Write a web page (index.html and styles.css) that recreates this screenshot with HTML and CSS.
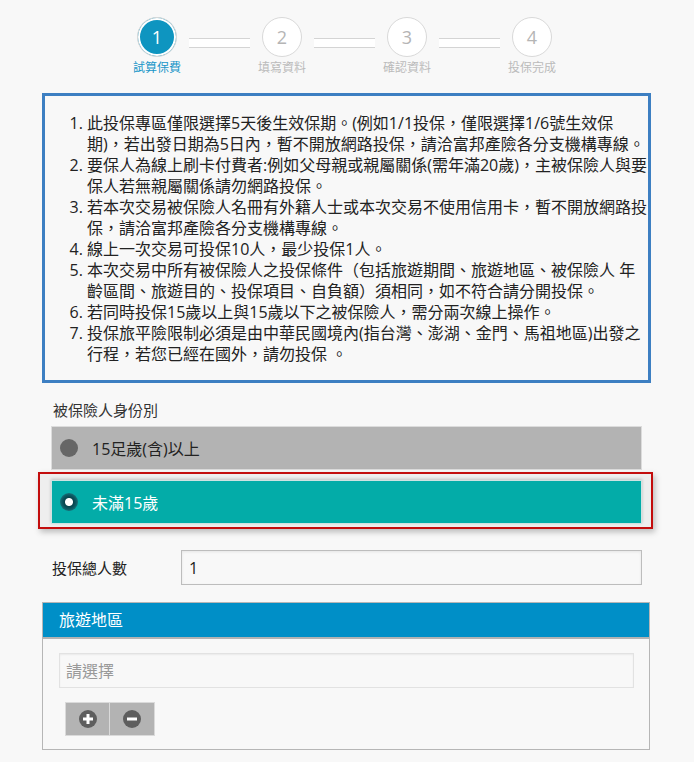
FILE: index.html
```html
<!DOCTYPE html>
<html lang="zh-Hant">
<head>
    <meta charset="UTF-8">
    <title>試算保費</title>
    <link rel="stylesheet" href="styles.css">
</head>
<body>
    <div class="steps">
        <div class="step active">
            <span class="circle">1</span>
            <span class="step-label">試算保費</span>
        </div>
        <div class="bar"></div>
        <div class="step">
            <span class="circle">2</span>
            <span class="step-label">填寫資料</span>
        </div>
        <div class="bar"></div>
        <div class="step">
            <span class="circle">3</span>
            <span class="step-label">確認資料</span>
        </div>
        <div class="bar"></div>
        <div class="step">
            <span class="circle">4</span>
            <span class="step-label">投保完成</span>
        </div>
    </div>

    <div class="page">
        <div class="notice">
            <ol>
                <li>此投保專區僅限選擇5天後生效保期。(例如1/1投保，僅限選擇1/6號生效保<br>期)，若出發日期為5日內，暫不開放網路投保，請洽富邦產險各分支機構專線。</li>
                <li>要保人為線上刷卡付費者:例如父母親或親屬關係(需年滿20歲)，主被保險人與要保人若無親屬關係請勿網路投保。</li>
                <li>若本次交易被保險人名冊有外籍人士或本次交易不使用信用卡，暫不開放網路投保，請洽富邦產險各分支機構專線。</li>
                <li>線上一次交易可投保10人，最少投保1人。</li>
                <li>本次交易中所有被保險人之投保條件（包括旅遊期間、旅遊地區、被保險人 年齡區間、旅遊目的、投保項目、自負額）須相同，如不符合請分開投保。</li>
                <li>若同時投保15歲以上與15歲以下之被保險人，需分兩次線上操作。</li>
                <li>投保旅平險限制必須是由中華民國境內(指台灣、澎湖、金門、馬祖地區)出發之行程，若您已經在國外，請勿投保 。</li>
            </ol>
        </div>

        <div class="field-title">被保險人身份別</div>
        <div class="options">
            <div class="option">
                <span class="radio"></span>
                <span>15足歲(含)以上</span>
            </div>
            <div class="option-focus">
                <div class="option checked">
                    <span class="radio"></span>
                    <span>未滿15歲</span>
                </div>
            </div>
        </div>

        <div class="count-row">
            <label for="total">投保總人數</label>
            <input type="text" id="total" value="1">
        </div>

        <div class="panel">
            <div class="panel-head">旅遊地區</div>
            <div class="panel-body">
                <input type="text" class="select" placeholder="請選擇">
                <div class="btns">
                    <button type="button" class="icon-btn">
                        <svg width="18" height="18" viewBox="0 0 18 18"><circle cx="9" cy="9" r="9" fill="#5e5e5e"/><rect x="4" y="7.5" width="10" height="3" fill="#fff"/><rect x="7.5" y="4" width="3" height="10" fill="#fff"/></svg>
                    </button>
                    <button type="button" class="icon-btn">
                        <svg width="18" height="18" viewBox="0 0 18 18"><circle cx="9" cy="9" r="9" fill="#5e5e5e"/><rect x="4" y="7.5" width="10" height="3" fill="#fff"/></svg>
                    </button>
                </div>
            </div>
        </div>
    </div>
</body>
</html>
```

FILE: styles.css
```css
body {
    margin: 0;
    background: #f8f8f8;
    font-family: "Open Sans", "Noto Sans CJK TC", sans-serif;
    color: #222;
}
.steps {
    display: flex;
    padding: 17px 0 0 137px;
}
.step {
    width: 40px;
    display: flex;
    flex-direction: column;
    align-items: center;
}
.circle {
    width: 38px;
    height: 38px;
    border: 1px solid #d9d9d9;
    border-radius: 50%;
    background: #fff;
    color: #b5b5b5;
    font-size: 18px;
    line-height: 38px;
    text-align: center;
}
.step.active .circle {
    background: #0e95c0;
    color: #fff;
    box-shadow: inset 0 0 0 2px #fff;
}
.step-label {
    margin-top: 3px;
    white-space: nowrap;
    font-size: 12px;
    line-height: 16px;
    color: #bbb;
}
.step.active .step-label {
    color: #1996c8;
}
.bar {
    width: 61px;
    height: 8px;
    margin: 21px 12px 0;
    background: #fff;
    border-top: 1px solid #d4d4d4;
    border-bottom: 1px solid #d4d4d4;
}
.page {
    width: 609px;
    margin-left: 42px;
    padding-bottom: 11px;
}
.notice {
    margin-top: 17px;
    border: 3px solid #3d7fc2;
    padding: 17px 0 15px 2px;
}
.notice ol {
    margin: 0 -3px 0 0;
    padding-left: 40px;
    font-size: 16px;
    line-height: 21px;
}
.field-title {
    margin: 17px 0 0 11px;
    font-size: 15px;
    line-height: 20px;
    color: #333;
}
.options {
    margin-top: 6px;
    padding: 0 9px;
}
.option {
    display: flex;
    align-items: center;
    gap: 14px;
    height: 42px;
    padding-left: 8px;
    border: 1px solid #dcdcdc;
    background: #b3b3b3;
    font-size: 16px;
}
.radio {
    width: 18px;
    height: 18px;
    border-radius: 50%;
    background: #666;
}
.option-focus {
    margin: 2px -11px 0 -13px;
    padding: 6px 9px 3px 11px;
    border: 2px solid #c30d0d;
    background: #eee;
    box-shadow: 2px 3px 6px rgba(0, 0, 0, 0.25);
}
.option.checked {
    background: #03aca8;
    border-color: #cfe3e2;
    color: #fff;
    box-shadow: 0 -1px 3px rgba(0, 0, 0, 0.2);
}
.option.checked .radio {
    background: radial-gradient(circle, #fff 0 3.5px, #08444d 4.5px, #0c5963 7px, #187078 9px);
}
.count-row {
    display: flex;
    align-items: center;
    margin-top: 21px;
    padding: 0 9px 0 10px;
}
.count-row label {
    width: 129px;
    font-size: 15px;
}
.count-row input {
    flex: 1;
    box-sizing: border-box;
    height: 35px;
    padding: 0 7px;
    border: 1px solid #bdbdbd;
    background: #f8f8f8;
    box-shadow: inset 0 1px 3px rgba(0, 0, 0, 0.08);
    font-family: inherit;
    font-size: 16px;
    color: #222;
}
.panel {
    margin: 17px 1px 0 0;
    border: 1px solid #b6b6b6;
}
.panel-head {
    height: 34px;
    line-height: 34px;
    padding-left: 16px;
    background: #008fc7;
    border-bottom: 2px solid #b3b3b3;
    color: #fff;
    font-size: 16px;
}
.panel-body {
    padding: 14px 15px 13px 16px;
}
.select {
    display: block;
    width: 100%;
    box-sizing: border-box;
    height: 35px;
    padding: 0 6px;
    border: 1px solid #e2e2e2;
    background: #f8f8f8;
    box-shadow: inset 0 1px 2px rgba(0, 0, 0, 0.06);
    font-family: inherit;
    font-size: 16px;
}
.select::placeholder {
    color: #999;
}
.btns {
    display: flex;
    margin: 14px 0 0 6px;
}
.icon-btn {
    width: 45px;
    height: 34px;
    padding: 0;
    border: 1px solid #dadada;
    background: #b3b3b3;
    display: flex;
    align-items: center;
    justify-content: center;
}
.icon-btn + .icon-btn {
    border-left: none;
}
.icon-btn svg {
    display: block;
}
```
